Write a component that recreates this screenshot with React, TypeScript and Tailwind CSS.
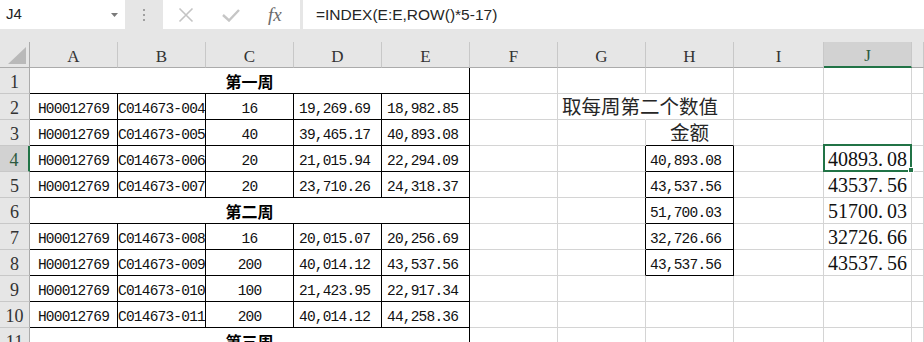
import React from "react";

type B = "g" | "b" | "n";

function C({
  w,
  r = "g",
  b = "g",
  cls = "",
  children,
}: {
  w: string;
  r?: B;
  b?: B;
  cls?: string;
  children?: React.ReactNode;
}) {
  const rc =
    r === "b" ? "border-r-black" : r === "n" ? "border-r-transparent" : "border-r-[#d4d4d4]";
  const bc = b === "b" ? "border-b-black" : "border-b-[#d4d4d4]";
  return (
    <div className={`shrink-0 h-full box-border border-r border-b ${w} ${rc} ${bc} ${cls}`}>
      {children}
    </div>
  );
}

const mono =
  "font-['Liberation_Mono',monospace] text-[14.5px] tracking-[-0.8px] leading-[16px] text-[#111] flex items-end pb-[2px] whitespace-nowrap";
const cjk = "font-['Noto_Sans_CJK_SC',sans-serif]";

const data: Record<number, string[]> = {
  2: ["H00012769", "C014673-004", "16", "19,269.69", "18,982.85"],
  3: ["H00012769", "C014673-005", "40", "39,465.17", "40,893.08"],
  4: ["H00012769", "C014673-006", "20", "21,015.94", "22,294.09"],
  5: ["H00012769", "C014673-007", "20", "23,710.26", "24,318.37"],
  7: ["H00012769", "C014673-008", "16", "20,015.07", "20,256.69"],
  8: ["H00012769", "C014673-009", "200", "40,014.12", "43,537.56"],
  9: ["H00012769", "C014673-010", "100", "21,423.95", "22,917.34"],
  10: ["H00012769", "C014673-011", "200", "40,014.12", "44,258.36"],
};

const titles: Record<number, string> = { 1: "第一周", 6: "第二周", 11: "第三周" };

const hv: Record<number, string> = {
  4: "40,893.08",
  5: "43,537.56",
  6: "51,700.03",
  7: "32,726.66",
  8: "43,537.56",
};
const jv: Record<number, string> = {
  4: "40893.08",
  5: "43537.56",
  6: "51700.03",
  7: "32726.66",
  8: "43537.56",
};

function TableCells({ n }: { n: number }) {
  if (titles[n]) {
    return (
      <C
        w="w-[440px]"
        r="b"
        b="b"
        cls={`${cjk} font-bold text-[16px] leading-[20px] text-black flex items-center justify-center`}
      >
        {titles[n]}
      </C>
    );
  }
  const d = data[n];
  return (
    <>
      <C w="w-[88px]" r="b" b="b" cls={`${mono} justify-center`}>{d[0]}</C>
      <C w="w-[88px]" r="b" b="b" cls={`${mono} justify-center`}>{d[1]}</C>
      <C w="w-[88px]" r="b" b="b" cls={`${mono} justify-center`}>{d[2]}</C>
      <C w="w-[88px]" r="b" b="b" cls={`${mono} pl-[5px]`}>{d[3]}</C>
      <C w="w-[88px]" r="b" b="b" cls={`${mono} pl-[5px]`}>{d[4]}</C>
    </>
  );
}

function JValue({ v }: { v: string }) {
  const [a, b] = v.split(".");
  return (
    <span>
      {a}
      <span className="mr-[4px]">.</span>
      {b}
    </span>
  );
}

function RightCells({ n }: { n: number }) {
  const inBox = n >= 4 && n <= 8;
  return (
    <>
      <C w="w-[88px]" />
      <C
        w="w-[88px]"
        r={n === 2 ? "n" : inBox ? "b" : "g"}
        cls={`${cjk} text-[19.5px] leading-[22px] text-[#262626] flex items-end pl-[4px] pb-[2px] whitespace-nowrap`}
      >
        {n === 2 ? "取每周第二个数值" : null}
      </C>
      {n === 3 ? (
        <C
          w="w-[88px]"
          b="b"
          cls={`${cjk} text-[19.5px] leading-[22px] text-[#262626] flex items-end justify-center pb-[2px] whitespace-nowrap`}
        >
          金额
        </C>
      ) : inBox ? (
        <C w="w-[88px]" r="b" b="b" cls={`${mono} pl-[4px]`}>
          {hv[n]}
        </C>
      ) : (
        <C w="w-[88px]" />
      )}
      <C w="w-[90px]" />
      <C
        w="w-[88px]"
        cls="relative font-['Liberation_Serif',serif] text-[20px] leading-[22px] text-[#111] flex items-end justify-end pr-[4px] pb-[1px] whitespace-nowrap"
      >
        {jv[n] ? <JValue v={jv[n]} /> : null}
        {n === 4 && (
          <div className="absolute z-10 left-[-1px] top-[-2px] right-[-1px] bottom-[-1px] border-2 border-[#217346]">
            <div className="absolute right-[-4px] bottom-[-3px] w-[6px] h-[6px] bg-[#217346] border border-white" />
          </div>
        )}
      </C>
      <C w="w-[12px]" />
    </>
  );
}

function RowHeader({ n }: { n: number }) {
  const sel = n === 4;
  return (
    <div
      className={`shrink-0 w-[30px] h-full box-border border-b border-b-[#c8c8c8] flex items-end justify-center pb-[1px] font-['Liberation_Serif',serif] text-[18px] leading-[20px] ${
        sel
          ? "bg-[#d2d2d2] border-r-2 border-r-[#217346] text-[#2d5a3f]"
          : "bg-[#e6e6e6] border-r border-r-[#ababab] text-[#333]"
      }`}
    >
      {n}
    </div>
  );
}

function ColHeader() {
  const cols: [string, string][] = [
    ["A", "w-[88px]"],
    ["B", "w-[88px]"],
    ["C", "w-[88px]"],
    ["D", "w-[88px]"],
    ["E", "w-[88px]"],
    ["F", "w-[88px]"],
    ["G", "w-[88px]"],
    ["H", "w-[88px]"],
    ["I", "w-[90px]"],
    ["J", "w-[88px]"],
    ["", "w-[12px]"],
  ];
  return (
    <div className="flex h-[26px] bg-[#e6e6e6]">
      <div className="shrink-0 w-[30px] h-full box-border border-r border-r-[#ababab] border-b border-b-[#ababab] flex items-end justify-end pr-[3px] pb-[3px]">
        <svg width="18" height="17" viewBox="0 0 18 17">
          <polygon points="18,0 18,17 0,17" fill="#b9b9b9" />
        </svg>
      </div>
      {cols.map(([c, w]) => (
        <div
          key={c + w}
          className={`shrink-0 h-full box-border border-r border-r-[#c8c8c8] flex items-end justify-center font-['Liberation_Serif',serif] text-[17px] leading-[20px] ${w} ${
            c === "J"
              ? "bg-[#d2d2d2] border-b-2 border-b-[#217346] text-[#2d5a3f]"
              : "border-b border-b-[#ababab] text-[#333]"
          }`}
        >
          {c}
        </div>
      ))}
    </div>
  );
}

function FormulaBar() {
  return (
    <div className="flex h-[30px] bg-[#e6e6e6]">
      <div className="shrink-0 w-[125px] h-[29px] bg-white flex items-center justify-between pl-[6px] pr-[7px]">
        <span className="text-[15px] text-[#222] font-['Liberation_Sans',sans-serif]">J4</span>
        <svg width="7" height="4" viewBox="0 0 7 4">
          <polygon points="0,0 7,0 3.5,4" fill="#7a7a7a" />
        </svg>
      </div>
      <div className="shrink-0 w-[38px] h-[29px] flex flex-col items-center justify-center gap-[3px]">
        <div className="w-[2px] h-[2px] bg-[#a0a0a0]" />
        <div className="w-[2px] h-[2px] bg-[#a0a0a0]" />
        <div className="w-[2px] h-[2px] bg-[#a0a0a0]" />
      </div>
      <div className="shrink-0 w-[137px] h-[29px] bg-white flex items-center">
        <svg className="ml-[15px]" width="16" height="16" viewBox="0 0 16 16">
          <path d="M1.5 1.5 L14.5 14.5 M14.5 1.5 L1.5 14.5" stroke="#c4c4c4" strokeWidth="1.6" fill="none" />
        </svg>
        <svg className="ml-[28px] mt-[2px]" width="18" height="13" viewBox="0 0 18 13">
          <path d="M1 6 L7 11.5 L17 1" stroke="#c6c6c6" strokeWidth="2.4" fill="none" />
        </svg>
        <span className="ml-[28px] font-['Liberation_Serif',serif] italic text-[19px] leading-none text-[#6b6b6b]">
          fx
        </span>
      </div>
      <div className="shrink-0 w-[3px]" />
      <div className="flex-1 h-[29px] bg-white flex items-center pl-[13px] text-[15.5px] text-[#262626] font-['Liberation_Sans',sans-serif]">
        =INDEX(E:E,ROW()*5-17)
      </div>
    </div>
  );
}

export default function App() {
  const rows = [1, 2, 3, 4, 5, 6, 7, 8, 9, 10, 11];
  return (
    <div className="w-[924px] h-[342px] overflow-hidden bg-[#e6e6e6]">
      <FormulaBar />
      <div className="h-[12px]" />
      <ColHeader />
      {rows.map((n) => (
        <div key={n} className="flex h-[26px] bg-white">
          <RowHeader n={n} />
          <TableCells n={n} />
          <RightCells n={n} />
        </div>
      ))}
    </div>
  );
}
